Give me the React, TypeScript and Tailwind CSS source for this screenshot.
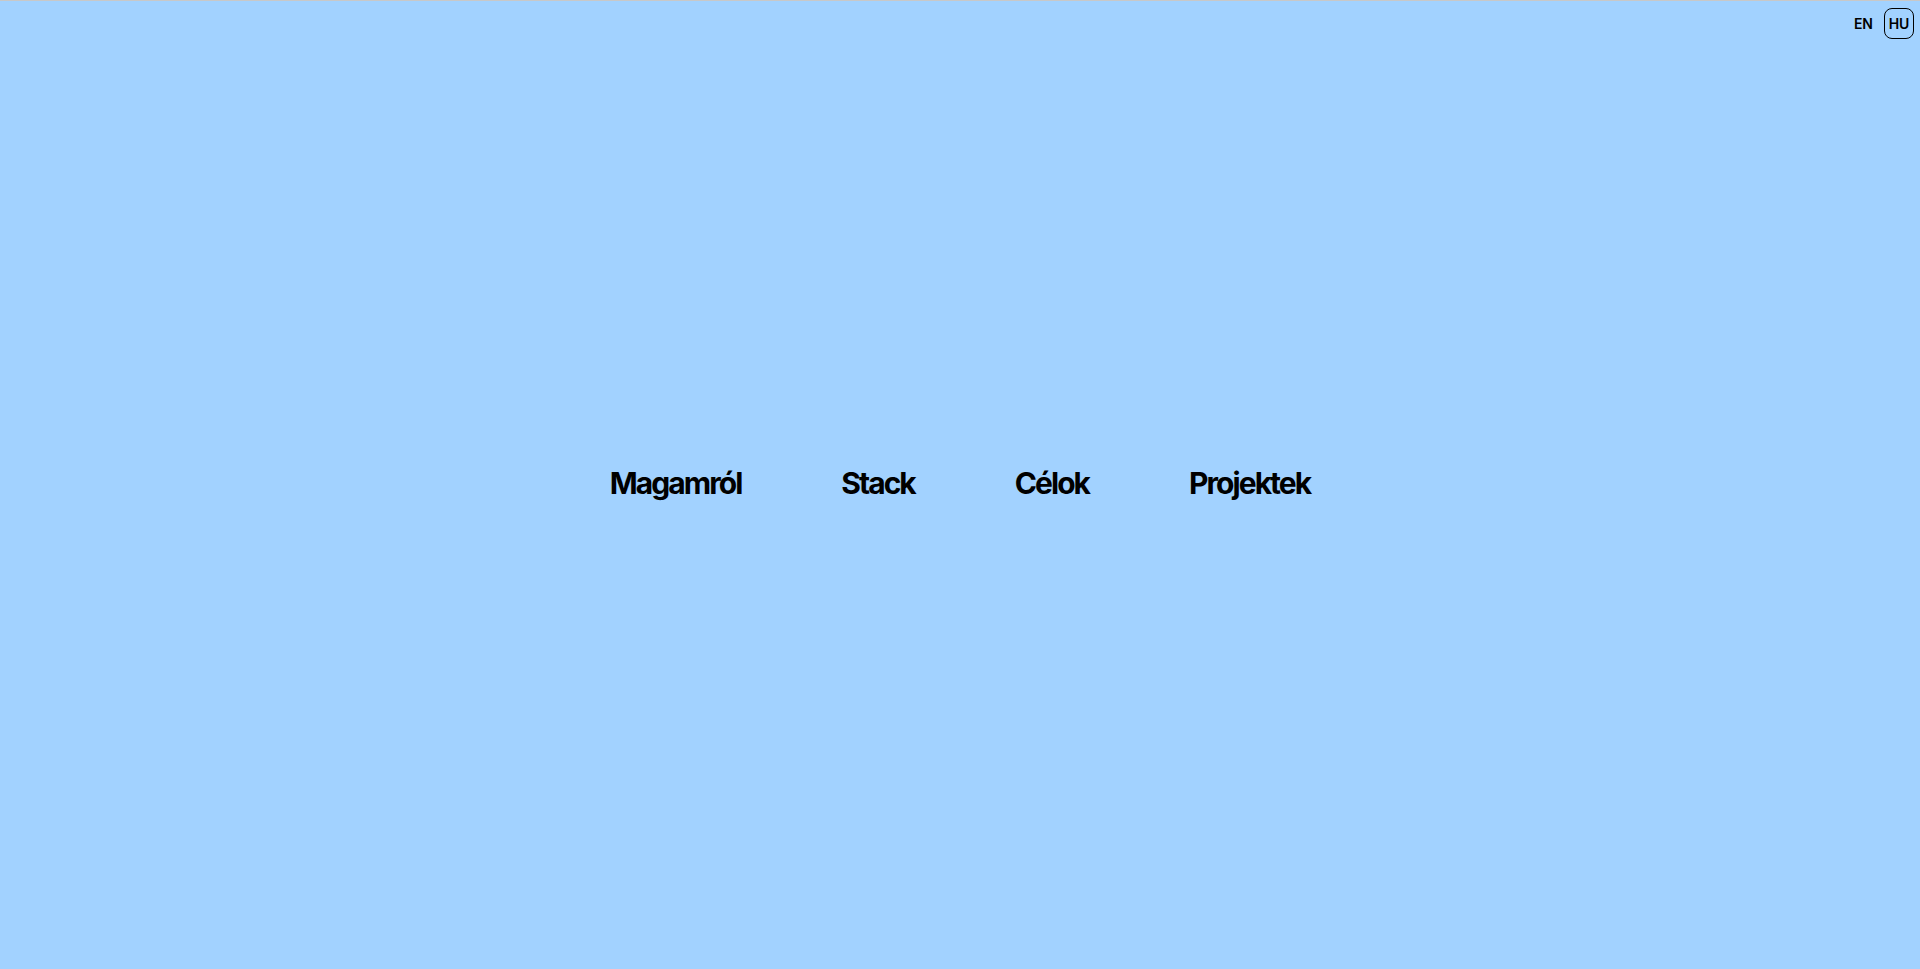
import React from 'react';

const links = ['Magamról', 'Stack', 'Célok', 'Projektek'];

const App: React.FC = () => {
  return (
    <div className="relative flex h-screen w-full flex-col bg-[#a2d2ff] border-t border-[#c8c8c8] font-['Inter',sans-serif] text-black">
      <div className="absolute right-[6px] top-[7px] flex items-center gap-[11px] text-[14px] font-semibold">
        <button className="leading-none">EN</button>
        <button className="flex h-[31px] w-[30px] items-center justify-center rounded-lg border border-black leading-none">
          HU
        </button>
      </div>
      <nav className="flex flex-1 items-center justify-center gap-[100px] pb-[5px]">
        {links.map((l) => (
          <a key={l} href="#" className="text-[30px] font-bold tracking-[-0.065em] leading-none">
            {l}
          </a>
        ))}
      </nav>
    </div>
  );
};

export default App;
